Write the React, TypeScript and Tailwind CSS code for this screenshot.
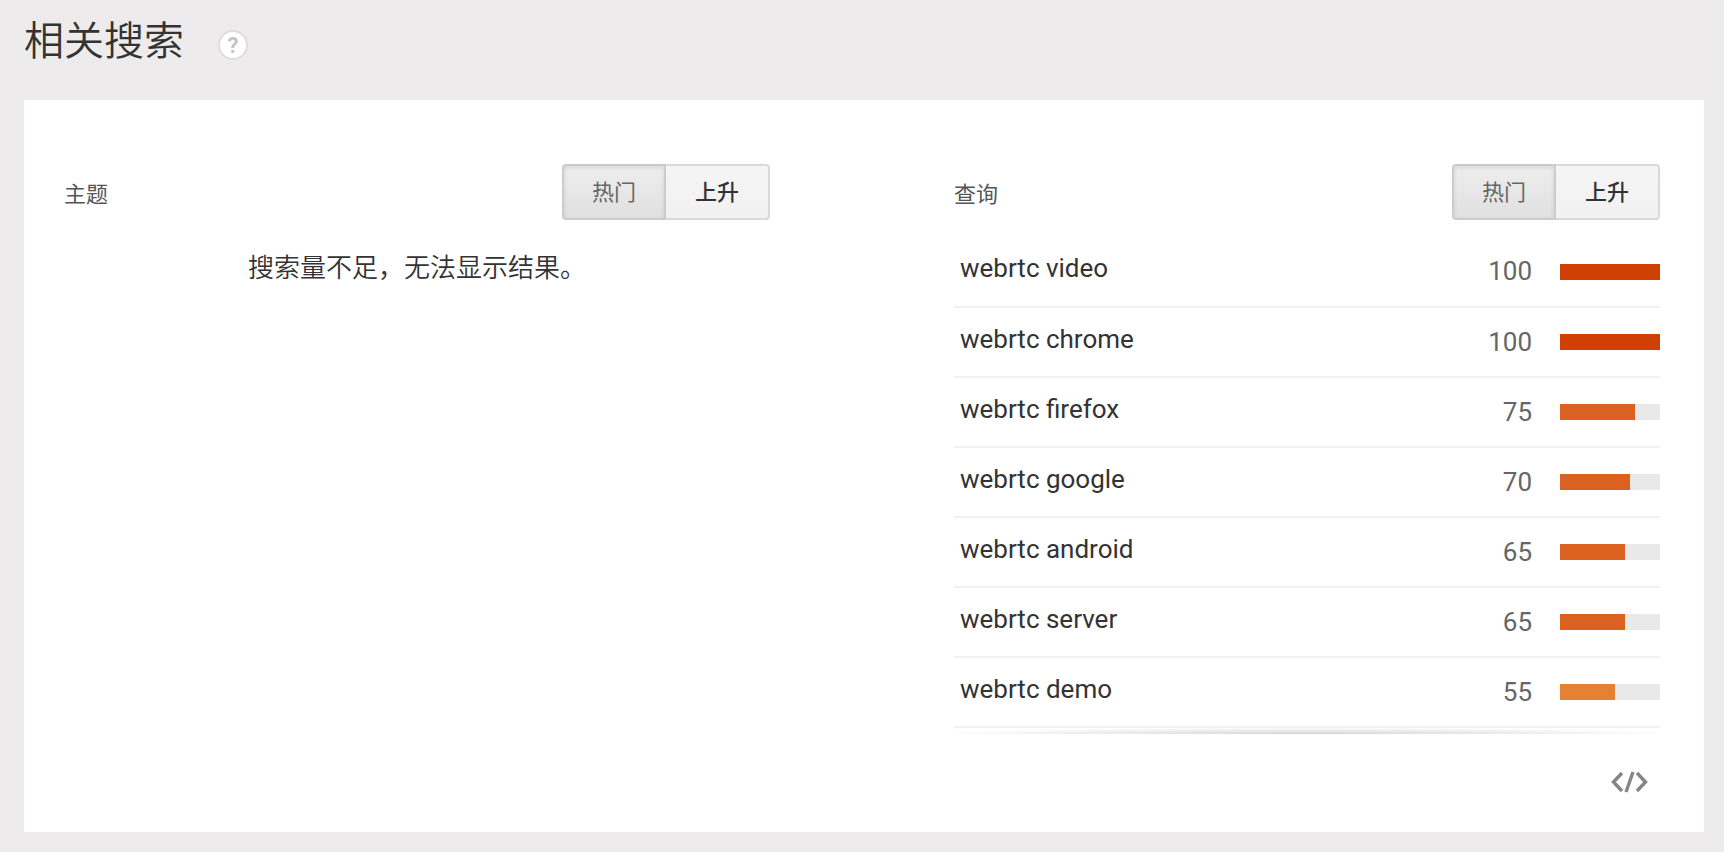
import { useState } from "react";

const queries = [
  { term: "webrtc video", value: 100, color: "bg-[#d04005]" },
  { term: "webrtc chrome", value: 100, color: "bg-[#d04005]" },
  { term: "webrtc firefox", value: 75, color: "bg-[#db6120]" },
  { term: "webrtc google", value: 70, color: "bg-[#db6120]" },
  { term: "webrtc android", value: 65, color: "bg-[#db6120]" },
  { term: "webrtc server", value: 65, color: "bg-[#db6120]" },
  { term: "webrtc demo", value: 55, color: "bg-[#e68033]" },
];

function SortToggle({ label }: { label: string }) {
  const [active, setActive] = useState("热门");

  return (
    <div role="group" aria-label={label} className="flex">
      {["热门", "上升"].map((option) => (
        <button
          key={option}
          type="button"
          aria-pressed={active === option}
          onClick={() => setActive(option)}
          className={
            active === option
              ? "h-14 w-26 border-2 border-[#cccccc] bg-linear-to-b from-[#eeeeee] to-[#e0e0e0] text-[22px] text-[#666666] shadow-[inset_0_2px_4px_rgba(0,0,0,0.1)] first:rounded-l-sm last:rounded-r-sm"
              : "h-14 w-26 border-2 border-[#d9d9d9] bg-linear-to-b from-[#f5f5f5] to-[#f1f1f1] text-[22px] font-medium text-[#333333] first:rounded-l-sm first:border-r-0 last:rounded-r-sm last:border-l-0"
          }
        >
          {option}
        </button>
      ))}
    </div>
  );
}

function SectionHeader({ title }: { title: string }) {
  return (
    <div className="flex items-center justify-between">
      <h2 className="pt-1 text-[22px] text-[#555555]">{title}</h2>
      <SortToggle label={title} />
    </div>
  );
}

export default function App() {
  return (
    <main className="min-h-screen bg-[#edebeb] pr-5 pb-5 pl-6 font-['Roboto','Noto_Sans_CJK_SC',sans-serif] text-[#333333]">
      <header className="flex h-25 items-start gap-[34px] pt-3">
        <h1 className="text-[40px] leading-15 font-[350]">相关搜索</h1>
        <button
          type="button"
          aria-label="帮助"
          className="mt-[18px] flex size-[30px] items-center justify-center rounded-full border-2 border-[#dddddd] bg-white text-[22px] font-bold text-[#c4c4c4]"
        >
          ?
        </button>
      </header>

      <div className="bg-white pt-16 pr-11 pl-10">
        <div className="grid grid-cols-2 gap-46">
          <section>
            <SectionHeader title="主题" />
            <p className="mt-7 text-center text-[26px] leading-10 font-[350]">
              搜索量不足，无法显示结果。
            </p>
          </section>

          <section>
            <SectionHeader title="查询" />
            <table aria-label="查询" className="mt-[17px] w-full border-collapse text-[26px]">
              <tbody>
                {queries.map((query) => (
                  <tr key={query.term} className="h-[70px] border-b-2 border-[#f1f1f1]">
                    <th scope="row" className="pb-1.5 pl-1.5 text-left font-normal">
                      {query.term}
                    </th>
                    <td className="w-20 text-right text-[#666666]">{query.value}</td>
                    <td className="w-32 pl-7">
                      <div className="h-4 bg-[#e9e9e9]">
                        <div
                          className={`h-4 ${query.color}`}
                          style={{ width: `${query.value}%` }}
                        />
                      </div>
                    </td>
                  </tr>
                ))}
              </tbody>
            </table>
            <div className="h-1.5 bg-[radial-gradient(ellipse_at_bottom,#d4d4d4,#ffffff_75%)]" />
          </section>
        </div>

        <footer className="flex h-[98px] items-center justify-end pr-3 pb-0.5">
          <button type="button" aria-label="嵌入">
            <svg
              viewBox="0 0 38 22"
              className="h-[22px] w-[38px]"
              fill="none"
              stroke="#858585"
              strokeWidth="3.4"
            >
              <path d="M12 2 3.5 11l8.500 9M27 2l8.500 9-8.500 9" />
              <path d="M23 1 16 21" />
            </svg>
          </button>
        </footer>
      </div>
    </main>
  );
}
